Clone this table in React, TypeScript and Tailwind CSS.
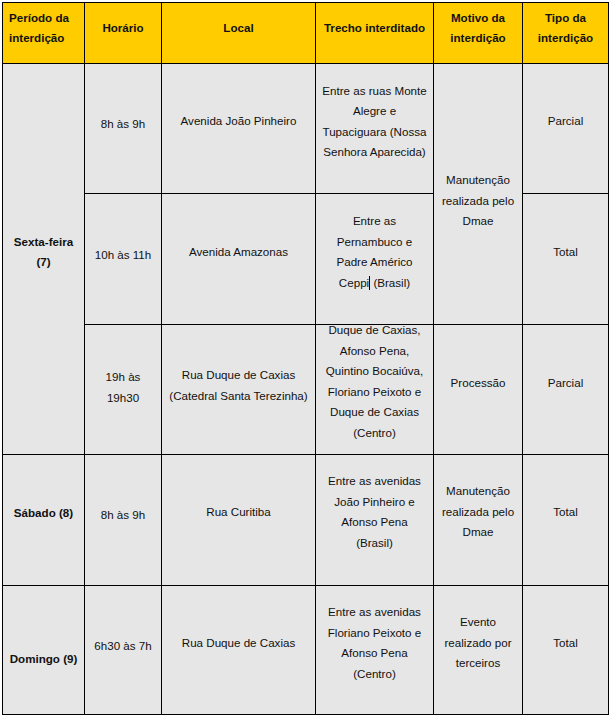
import React from "react";

const font = { fontFamily: '"Liberation Sans", Arial, sans-serif' };

const head =
  "flex items-center justify-center text-center font-bold border-r border-b border-black bg-[#ffcc00] pb-[10px]";
const cell =
  "flex items-center justify-center text-center border-r border-b border-black px-1";

export default function App() {
  return (
    <div className="bg-white w-[613px] h-[719px] p-[2px]" style={font}>
      <div className="grid grid-cols-[82px_77px_154px_118px_89px_86px] grid-rows-[61px_130px_131px_130px_131px_129px] border-l border-t border-black bg-[#e6e6e6] text-[11.6px] leading-[20.5px] text-[#111] w-max">
        {/* header */}
        <div className="flex items-center border-r border-b border-black bg-[#ffcc00] font-bold pl-[6px] pb-[10px]">
          Período da
          <br />
          interdição
        </div>
        <div className={head}>Horário</div>
        <div className={head}>Local</div>
        <div className={head}>Trecho interditado</div>
        <div className={head}>
          Motivo da
          <br />
          interdição
        </div>
        <div className={head}>
          Tipo da
          <br />
          interdição
        </div>

        {/* sexta-feira */}
        <div className={`${cell} row-span-3 font-bold pb-[14px]`}>
          Sexta-feira
          <br />
          (7)
        </div>
        <div className={`${cell} pb-[8px]`}>8h às 9h</div>
        <div className={`${cell} pb-[14px]`}>Avenida João Pinheiro</div>
        <div className={`${cell} pb-[14px]`}>
          Entre as ruas Monte
          <br />
          Alegre e
          <br />
          Tupaciguara (Nossa
          <br />
          Senhora Aparecida)
        </div>
        <div className={`${cell} row-span-2 pt-[14px]`}>
          Manutenção
          <br />
          realizada pelo
          <br />
          Dmae
        </div>
        <div className={`${cell} pb-[14px]`}>Parcial</div>

        <div className={`${cell} pb-[8px]`}>10h às 11h</div>
        <div className={`${cell} pb-[14px]`}>Avenida Amazonas</div>
        <div className={`${cell} pb-[14px]`}>
          <span>
            Entre as
            <br />
            Pernambuco e
            <br />
            Padre Américo
            <br />
            Ceppi
            <span className="inline-block w-px h-[14px] bg-black align-[-3px]" />{" "}
            (Brasil)
          </span>
        </div>
        <div className={`${cell} pb-[14px]`}>Total</div>

        <div className={`${cell} pb-[4px]`}>
          19h às
          <br />
          19h30
        </div>
        <div className={`${cell} pb-[8px]`}>
          Rua Duque de Caxias
          <br />
          (Catedral Santa Terezinha)
        </div>
        <div className={`${cell} pb-[16px]`}>
          Duque de Caxias,
          <br />
          Afonso Pena,
          <br />
          Quintino Bocaiúva,
          <br />
          Floriano Peixoto e
          <br />
          Duque de Caxias
          <br />
          (Centro)
        </div>
        <div className={`${cell} pb-[12px]`}>Processão</div>
        <div className={`${cell} pb-[12px]`}>Parcial</div>

        {/* sábado */}
        <div className={`${cell} font-bold pb-[14px]`}>Sábado (8)</div>
        <div className={`${cell} pb-[10px]`}>8h às 9h</div>
        <div className={`${cell} pb-[16px]`}>Rua Curitiba</div>
        <div className={`${cell} pb-[16px]`}>
          Entre as avenidas
          <br />
          João Pinheiro e
          <br />
          Afonso Pena
          <br />
          (Brasil)
        </div>
        <div className={`${cell} pb-[16px]`}>
          Manutenção
          <br />
          realizada pelo
          <br />
          Dmae
        </div>
        <div className={`${cell} pb-[16px]`}>Total</div>

        {/* domingo */}
        <div className={`${cell} font-bold pt-[18px]`}>Domingo (9)</div>
        <div className={`${cell} pb-[8px]`}>6h30 às 7h</div>
        <div className={`${cell} pb-[14px]`}>Rua Duque de Caxias</div>
        <div className={`${cell} pb-[14px]`}>
          Entre as avenidas
          <br />
          Floriano Peixoto e
          <br />
          Afonso Pena
          <br />
          (Centro)
        </div>
        <div className={`${cell} pb-[14px]`}>
          Evento
          <br />
          realizado por
          <br />
          terceiros
        </div>
        <div className={`${cell} pb-[14px]`}>Total</div>
      </div>
    </div>
  );
}
